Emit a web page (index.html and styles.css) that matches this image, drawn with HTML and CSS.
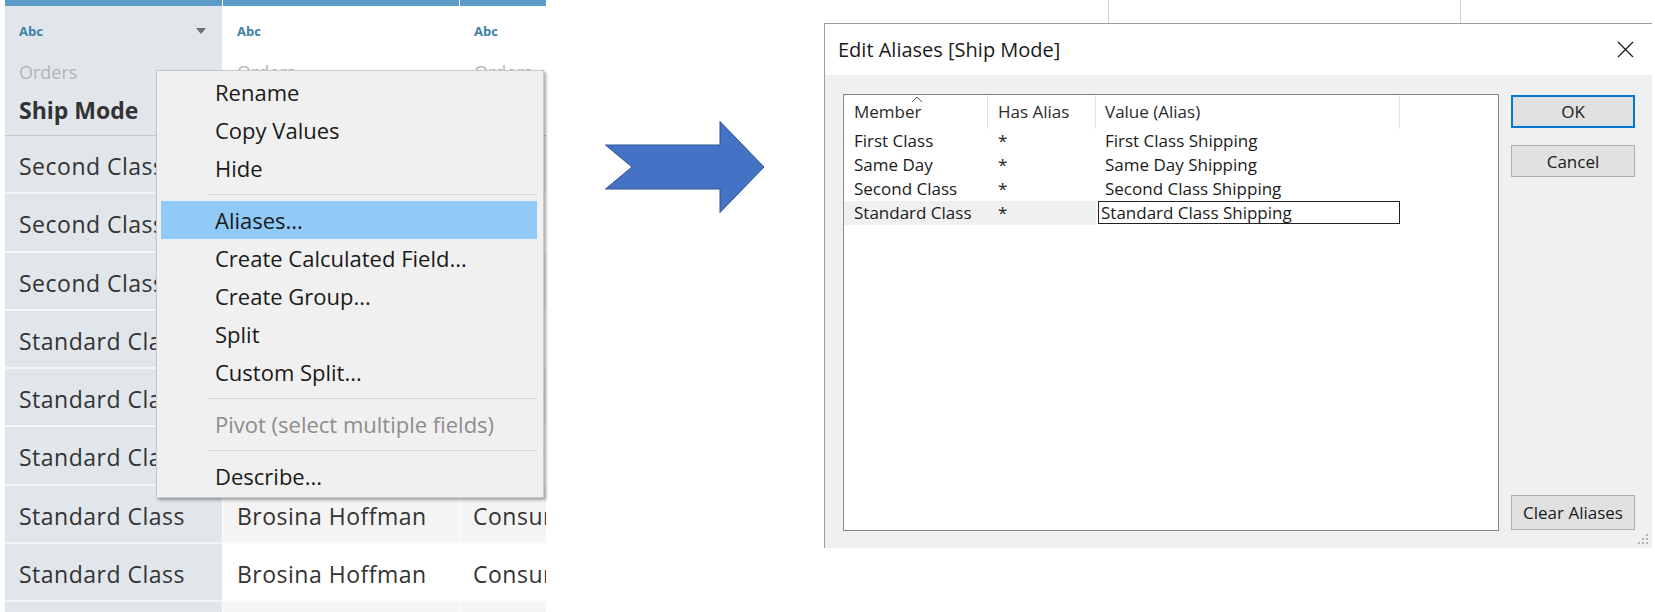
FILE: index.html
```html
<!DOCTYPE html>
<html lang="en">
<head>
    <meta charset="UTF-8">
    <meta name="viewport" content="width=device-width, initial-scale=1.0">
    <title>Edit Aliases</title>
    <link rel="stylesheet" href="styles.css">
</head>
<body>
    <div class="stage">
        <!-- data source grid with the field context menu open -->
        <div class="sheet">
            <div class="col col-key">
                <div class="col-head">
                    <div class="head-top"><span class="type">Abc</span><span class="caret-down"></span></div>
                    <div class="source">Orders</div>
                    <div class="field">Ship Mode</div>
                </div>
                <div class="cell">Second Class</div>
                <div class="cell">Second Class</div>
                <div class="cell">Second Class</div>
                <div class="cell">Standard Class</div>
                <div class="cell">Standard Class</div>
                <div class="cell">Standard Class</div>
                <div class="cell">Standard Class</div>
                <div class="cell">Standard Class</div>
                <div class="cell"></div>
            </div>
            <div class="col col-wide">
                <div class="col-head">
                    <div class="head-top"><span class="type">Abc</span></div>
                    <div class="source">Orders</div>
                    <div class="field"></div>
                </div>
                <div class="cell"></div>
                <div class="cell"></div>
                <div class="cell"></div>
                <div class="cell"></div>
                <div class="cell"></div>
                <div class="cell"></div>
                <div class="cell">Brosina Hoffman</div>
                <div class="cell">Brosina Hoffman</div>
                <div class="cell"></div>
            </div>
            <div class="col col-narrow">
                <div class="col-head">
                    <div class="head-top"><span class="type">Abc</span></div>
                    <div class="source">Orders</div>
                    <div class="field"></div>
                </div>
                <div class="cell"></div>
                <div class="cell"></div>
                <div class="cell"></div>
                <div class="cell"></div>
                <div class="cell"></div>
                <div class="cell"></div>
                <div class="cell">Consumer</div>
                <div class="cell">Consumer</div>
                <div class="cell"></div>
            </div>

            <div class="menu">
                <div class="menu-item">Rename</div>
                <div class="menu-item">Copy Values</div>
                <div class="menu-item">Hide</div>
                <div class="menu-sep"></div>
                <div class="menu-item active">Aliases...</div>
                <div class="menu-item">Create Calculated Field...</div>
                <div class="menu-item">Create Group...</div>
                <div class="menu-item">Split</div>
                <div class="menu-item">Custom Split...</div>
                <div class="menu-sep"></div>
                <div class="menu-item disabled">Pivot (select multiple fields)</div>
                <div class="menu-sep"></div>
                <div class="menu-item">Describe...</div>
            </div>
        </div>

        <svg class="arrow" width="160" height="92" viewBox="0 0 160 92">
            <polygon points="0.5,24 115,24 115,0.5 159,46 115,91.5 115,68 0.5,68 27,46" fill="#4472c4" stroke="#2f528f" stroke-width="1"/>
        </svg>

        <div class="dialog-wrap">
            <div class="backdrop-ticks"><span></span><span></span></div>
            <div class="dialog">
                <div class="dialog-title">
                    <span>Edit Aliases [Ship Mode]</span>
                    <svg class="close" width="17" height="17" viewBox="0 0 17 17">
                        <path d="M1 1 L16 16 M16 1 L1 16" stroke="#1a1a1a" stroke-width="1.3" fill="none"/>
                    </svg>
                </div>
                <div class="dialog-body">
                    <div class="alias-list">
                        <div class="list-head">
                            <div class="lh">Member
                                <svg class="sort" width="12" height="7" viewBox="0 0 12 7">
                                    <path d="M1 6 L6 1 L11 6" stroke="#555" stroke-width="1" fill="none"/>
                                </svg>
                            </div>
                            <div class="lh">Has Alias</div>
                            <div class="lh lh-value">Value (Alias)</div>
                            <div class="lh lh-rest"></div>
                        </div>
                        <div class="list-row">
                            <div class="lc">First Class</div>
                            <div class="lc">*</div>
                            <div class="lc lc-value">First Class Shipping</div>
                        </div>
                        <div class="list-row">
                            <div class="lc">Same Day</div>
                            <div class="lc">*</div>
                            <div class="lc lc-value">Same Day Shipping</div>
                        </div>
                        <div class="list-row">
                            <div class="lc">Second Class</div>
                            <div class="lc">*</div>
                            <div class="lc lc-value">Second Class Shipping</div>
                        </div>
                        <div class="list-row editing">
                            <div class="lc">Standard Class</div>
                            <div class="lc">*</div>
                            <div class="lc lc-edit"><div class="alias-edit">Standard Class Shipping</div></div>
                        </div>
                    </div>
                    <div class="dialog-buttons">
                        <button class="btn btn-default">OK</button>
                        <button class="btn btn-cancel">Cancel</button>
                        <button class="btn btn-clear">Clear Aliases</button>
                    </div>
                </div>
                <svg class="grip" width="13" height="13" viewBox="0 0 13 13">
                    <rect x="10" y="1" width="2" height="2" fill="#b4b4b4"/>
                    <rect x="10" y="5" width="2" height="2" fill="#b4b4b4"/>
                    <rect x="6" y="5" width="2" height="2" fill="#b4b4b4"/>
                    <rect x="10" y="9" width="2" height="2" fill="#b4b4b4"/>
                    <rect x="6" y="9" width="2" height="2" fill="#b4b4b4"/>
                    <rect x="2" y="9" width="2" height="2" fill="#b4b4b4"/>
                </svg>
            </div>
        </div>
    </div>
</body>
</html>
```

FILE: styles.css
```css
* {
    box-sizing: border-box;
}
body {
    margin: 0;
    background-color: #fff;
    font-family: 'Open Sans', 'Noto Sans', sans-serif;
    color: #333;
    overflow: hidden;
}
.stage {
    display: flex;
    align-items: flex-start;
    width: 1655px;
    height: 612px;
    overflow: hidden;
}

/* data grid */
.sheet {
    position: relative;
    display: flex;
    gap: 1px;
    flex-shrink: 0;
    width: 546px;
    height: 612px;
    padding-left: 5px;
}
.col {
    flex-shrink: 0;
    overflow: hidden;
}
.col-key {
    width: 217px;
    background-color: #e1e6eb;
}
.col-wide {
    width: 236px;
}
.col-narrow {
    width: 86px;
}
.col-head {
    height: 136px;
    border-top: 6px solid #5d9cc9;
    border-bottom: 1px solid #c6c6c6;
    padding: 0 16px 0 14px;
}
.head-top {
    display: flex;
    justify-content: space-between;
    align-items: center;
    height: 20px;
    margin-top: 15px;
}
.type {
    font-size: 13px;
    font-weight: bold;
    color: #3d80a6;
}
.caret-down {
    width: 0;
    height: 0;
    border-left: 5.5px solid transparent;
    border-right: 5.5px solid transparent;
    border-top: 6px solid #707070;
}
.source {
    margin-top: 19px;
    font-size: 18px;
    line-height: 24px;
    color: #b3b3b3;
    white-space: nowrap;
}
.field {
    margin-top: 11px;
    height: 30px;
    font-size: 23px;
    font-weight: bold;
    line-height: 30px;
    color: #333;
}
.cell {
    height: 58.3px;
    padding: 2px 0 0 14px;
    line-height: 56px;
    font-size: 23px;
    letter-spacing: 0.5px;
    white-space: nowrap;
    border-bottom: 2px solid #fbfbfb;
}
.col-key .cell {
    border-bottom-color: #f3f5f7;
}
.col-wide .cell:nth-child(even),
.col-narrow .cell:nth-child(even) {
    background-color: #f4f4f4;
}
.col-narrow .cell {
    padding-left: 13px;
}

/* context menu */
.menu {
    position: absolute;
    left: 156px;
    top: 70px;
    width: 388px;
    height: 428px;
    padding: 2px 6px 0 4px;
    background-color: #f0f0f0;
    border: 1px solid #c9c9c9;
    box-shadow: 2px 2px 3px rgba(0, 0, 0, 0.35);
    font-size: 22px;
    color: #1a1a1a;
}
.menu-item {
    height: 38px;
    line-height: 38px;
    padding-left: 54px;
    white-space: nowrap;
}
.menu-item.active {
    background-color: #91c9f7;
}
.menu-item.disabled {
    color: #8d8d8d;
}
.menu-sep {
    display: flex;
    align-items: center;
    height: 14px;
    padding-left: 47px;
}
.menu-sep::after {
    content: '';
    flex: 1;
    border-top: 1px solid #d7d7d7;
}

.arrow {
    flex-shrink: 0;
    margin-left: 59px;
    margin-top: 121px;
}

/* edit aliases dialog */
.dialog-wrap {
    flex-shrink: 0;
    width: 828px;
    margin-left: 59px;
}
.backdrop-ticks {
    display: flex;
    height: 23px;
}
.backdrop-ticks span {
    width: 1px;
    background-color: #d4d4d4;
}
.backdrop-ticks span:first-child {
    margin-left: 284px;
}
.backdrop-ticks span + span {
    margin-left: 351px;
}
.dialog {
    position: relative;
    border-top: 1px solid #9e9e9e;
    border-left: 1px solid #9e9e9e;
    color: #1a1a1a;
}
.dialog-title {
    display: flex;
    justify-content: space-between;
    align-items: center;
    height: 51px;
    padding: 0 18px 0 13px;
    background-color: #fff;
    font-size: 20px;
}
.dialog-body {
    display: grid;
    grid-template-columns: 1fr 124px;
    column-gap: 12px;
    height: 473px;
    padding: 19px 17px 17px 18px;
    background-color: #f0f0f0;
}
.alias-list {
    background-color: #fff;
    border: 1px solid #828790;
    font-size: 17px;
}
.list-head,
.list-row {
    display: grid;
    grid-template-columns: 144px 108px 304px 1fr;
}
.list-head {
    height: 34px;
}
.lh {
    position: relative;
    padding-left: 10px;
    line-height: 34px;
    border-right: 1px solid #e5e5e5;
    color: #2a2a2a;
}
.lh-value {
    padding-left: 9px;
}
.lh-rest {
    border-right: none;
}
.sort {
    position: absolute;
    left: 67px;
    top: 1px;
}
.list-row {
    height: 24px;
    line-height: 24px;
}
.lc {
    padding-left: 10px;
    white-space: nowrap;
}
.lc-value {
    padding-left: 9px;
}
.list-row.editing .lc:not(.lc-edit) {
    background-color: #f0f0f0;
}
.lc-edit {
    padding-left: 0;
}
.alias-edit {
    height: 23px;
    margin-left: 2px;
    padding-left: 2px;
    line-height: 21px;
    background-color: #fff;
    border: 1px solid #222;
}
.dialog-buttons {
    display: flex;
    flex-direction: column;
}
.btn {
    height: 33px;
    padding: 0;
    font-family: 'Open Sans', sans-serif;
    font-size: 17px;
    color: #1a1a1a;
    background-color: #e1e1e1;
    border: 1px solid #adadad;
}
.btn-default {
    margin-top: 1px;
    border: 2px solid #0078d7;
}
.btn-cancel {
    height: 32px;
    margin-top: 17px;
}
.btn-clear {
    height: 35px;
    margin-top: auto;
    margin-bottom: 1px;
}
.grip {
    position: absolute;
    right: 3px;
    bottom: 2px;
}
```
